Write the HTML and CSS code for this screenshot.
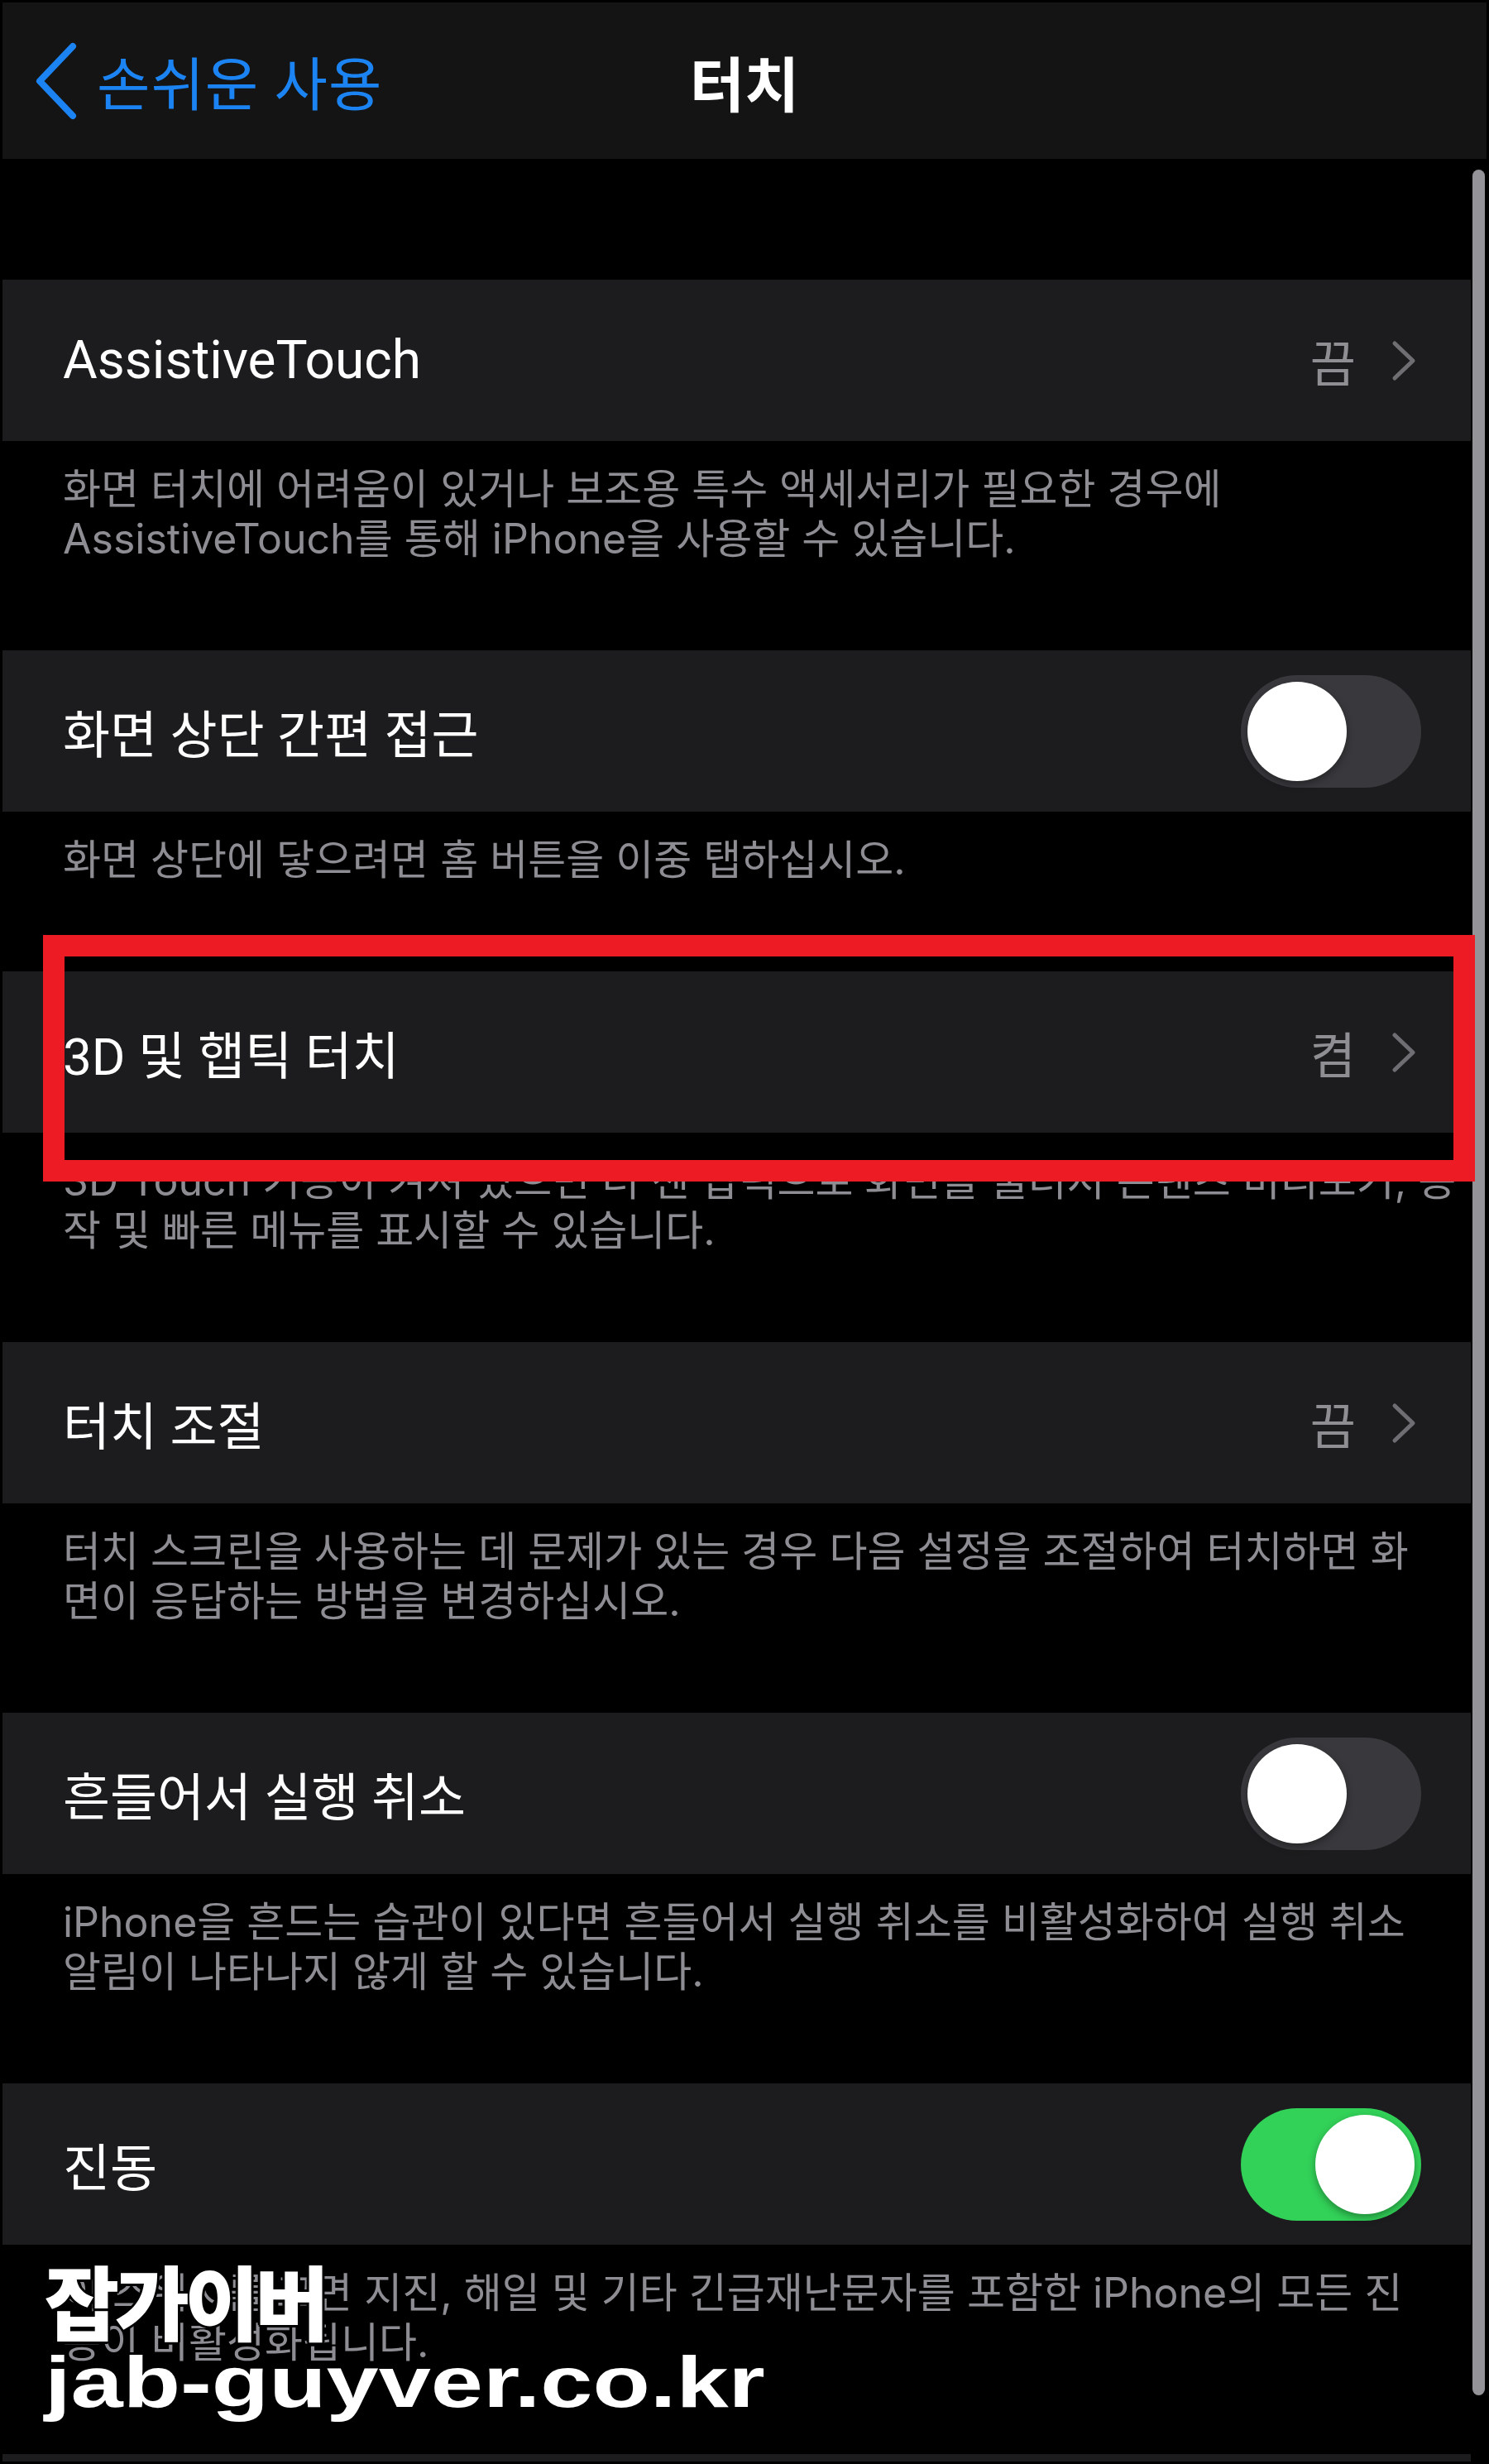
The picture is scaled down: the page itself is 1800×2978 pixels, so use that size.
FILE: index.html
```html
<!DOCTYPE html>
<html lang="ko">
<head>
    <meta charset="UTF-8">
    <meta name="viewport" content="width=device-width, initial-scale=1.0">
    <title>터치</title>
    <link rel="stylesheet" href="styles.css">
</head>
<body>
    <div class="screen">
        <header class="navbar">
            <a class="back" href="#">
                <svg class="back-chevron" width="56" height="96" viewBox="0 0 56 96">
                    <path d="M48 6 L8 48 L48 90" fill="none" stroke="#1b84f2" stroke-width="8" stroke-linecap="round" stroke-linejoin="round"/>
                </svg>
                <span>손쉬운 사용</span>
            </a>
            <h1 class="title">터치</h1>
            <span></span>
        </header>

        <main class="list">
            <section class="group">
                <div class="cell">
                    <span class="label latin">AssistiveTouch</span>
                    <span class="detail">끔
                        <svg class="chevron" width="34" height="50" viewBox="0 0 34 50"><path d="M6 4 L28 25 L6 46" fill="none" stroke="#6e6e73" stroke-width="5" stroke-linecap="round" stroke-linejoin="round"/></svg>
                    </span>
                </div>
                <p class="footer">화면 터치에 어려움이 있거나 보조용 특수 액세서리가 필요한 경우에<br>AssistiveTouch를 통해 iPhone을 사용할 수 있습니다.</p>
            </section>

            <section class="group">
                <div class="cell">
                    <span class="label">화면 상단 간편 접근</span>
                    <span class="switch"><span class="knob"></span></span>
                </div>
                <p class="footer">화면 상단에 닿으려면 홈 버튼을 이중 탭하십시오.</p>
            </section>

            <section class="group">
                <div class="cell">
                    <span class="label">3D 및 햅틱 터치</span>
                    <span class="detail">켬
                        <svg class="chevron" width="34" height="50" viewBox="0 0 34 50"><path d="M6 4 L28 25 L6 46" fill="none" stroke="#6e6e73" stroke-width="5" stroke-linecap="round" stroke-linejoin="round"/></svg>
                    </span>
                </div>
                <p class="footer">3D Touch 기능이 켜져 있으면 더 센 압력으로 화면을 눌러서 콘텐츠 미리보기, 동<br>작 및 빠른 메뉴를 표시할 수 있습니다.</p>
            </section>

            <section class="group">
                <div class="cell">
                    <span class="label">터치 조절</span>
                    <span class="detail">끔
                        <svg class="chevron" width="34" height="50" viewBox="0 0 34 50"><path d="M6 4 L28 25 L6 46" fill="none" stroke="#6e6e73" stroke-width="5" stroke-linecap="round" stroke-linejoin="round"/></svg>
                    </span>
                </div>
                <p class="footer">터치 스크린을 사용하는 데 문제가 있는 경우 다음 설정을 조절하여 터치하면 화<br>면이 응답하는 방법을 변경하십시오.</p>
            </section>

            <section class="group">
                <div class="cell">
                    <span class="label">흔들어서 실행 취소</span>
                    <span class="switch"><span class="knob"></span></span>
                </div>
                <p class="footer">iPhone을 흔드는 습관이 있다면 흔들어서 실행 취소를 비활성화하여 실행 취소<br>알림이 나타나지 않게 할 수 있습니다.</p>
            </section>

            <section class="group">
                <div class="cell">
                    <span class="label">진동</span>
                    <span class="switch on"><span class="knob"></span></span>
                </div>
                <p class="footer">이 스위치를 끄면 지진, 해일 및 기타 긴급재난문자를 포함한 iPhone의 모든 진<br>동이 비활성화됩니다.</p>
            </section>

            <section class="group">
                <div class="cell"></div>
            </section>
        </main>

        <div class="scrollbar"></div>
        <div class="highlight"></div>

        <div class="watermark">
            <div class="wm-ko">잡가이버</div>
            <div class="wm-en">jab-guyver.co.kr</div>
        </div>
    </div>
</body>
</html>
```

FILE: styles.css
```css
body
{
    margin: 0;
    padding: 0;
    background: #000;
    font-family: Roboto, "Noto Sans CJK KR", sans-serif;
}

.screen
{
    position: relative;
    width: 1800px;
    height: 2978px;
    box-sizing: border-box;
    border: 3px solid #000;
    overflow: hidden;
    background: #000;
}

/* top navigation */
.navbar
{
    height: 189px;
    background: #141414;
    display: grid;
    grid-template-columns: 1fr auto 1fr;
    align-items: center;
}

.back
{
    display: flex;
    align-items: center;
    gap: 21px;
    padding-left: 37px;
    color: #1b84f2;
    text-decoration: none;
    font-size: 70px;
    letter-spacing: 1px;
}

.title
{
    margin: 0;
    color: #fff;
    font-size: 72px;
    font-weight: 600;
}

/* grouped list */
.list
{
    width: 1775px;
    padding-top: 146px;
}

.cell
{
    height: 195px;
    background: #1c1c1e;
    display: flex;
    justify-content: space-between;
    align-items: center;
    padding: 0 60px 0 73px;
    box-sizing: border-box;
}

.label
{
    color: #fff;
    font-size: 62px;
}

.label.latin { font-size: 64px; }

.detail
{
    display: flex;
    align-items: center;
    gap: 41px;
    color: #8e8e93;
    font-size: 60px;
}

.chevron { margin-right: 4px; }

.footer
{
    margin: 0;
    padding: 28px 60px 105px 73px;
    font-family: Inter, "Noto Sans CJK KR", sans-serif;
    color: #8d8d93;
    font-size: 50px;
    line-height: 60px;
    white-space: nowrap;
}

/* switches */
.switch
{
    width: 218px;
    height: 136px;
    border-radius: 68px;
    background: #39393d;
    display: flex;
    align-items: center;
    padding: 0 8px;
    box-sizing: border-box;
}

.switch .knob
{
    width: 120px;
    height: 120px;
    border-radius: 50%;
    background: #fff;
    box-shadow: 0 4px 10px rgba(0, 0, 0, 0.35);
}

.switch.on
{
    background: #32d158;
    justify-content: flex-end;
}

/* overlays */
.scrollbar
{
    position: absolute;
    left: 1777px;
    top: 202px;
    width: 15px;
    height: 2690px;
    border-radius: 8px;
    background: #939398;
}

.highlight
{
    position: absolute;
    left: 49px;
    top: 1127px;
    width: 1731px;
    height: 298px;
    box-sizing: border-box;
    border: 26px solid #ed1c24;
}

.watermark
{
    position: absolute;
    left: 51px;
    top: 2726px;
    color: #fff;
    text-shadow: 3px 0 0 #000, -3px 0 0 #000, 0 3px 0 #000, 0 -3px 0 #000,
                 2px 2px 0 #000, -2px 2px 0 #000, 2px -2px 0 #000, -2px -2px 0 #000;
}

.wm-ko
{
    font-family: "Noto Sans CJK KR", sans-serif;
    font-weight: 900;
    font-size: 98px;
    line-height: 98px;
    letter-spacing: -5.5px;
}

.wm-en
{
    margin-top: 8px;
    font-family: "Liberation Sans", Arial, sans-serif;
    font-weight: 700;
    font-size: 88px;
    line-height: 88px;
    transform: scaleX(1.29);
    transform-origin: left center;
}
```
